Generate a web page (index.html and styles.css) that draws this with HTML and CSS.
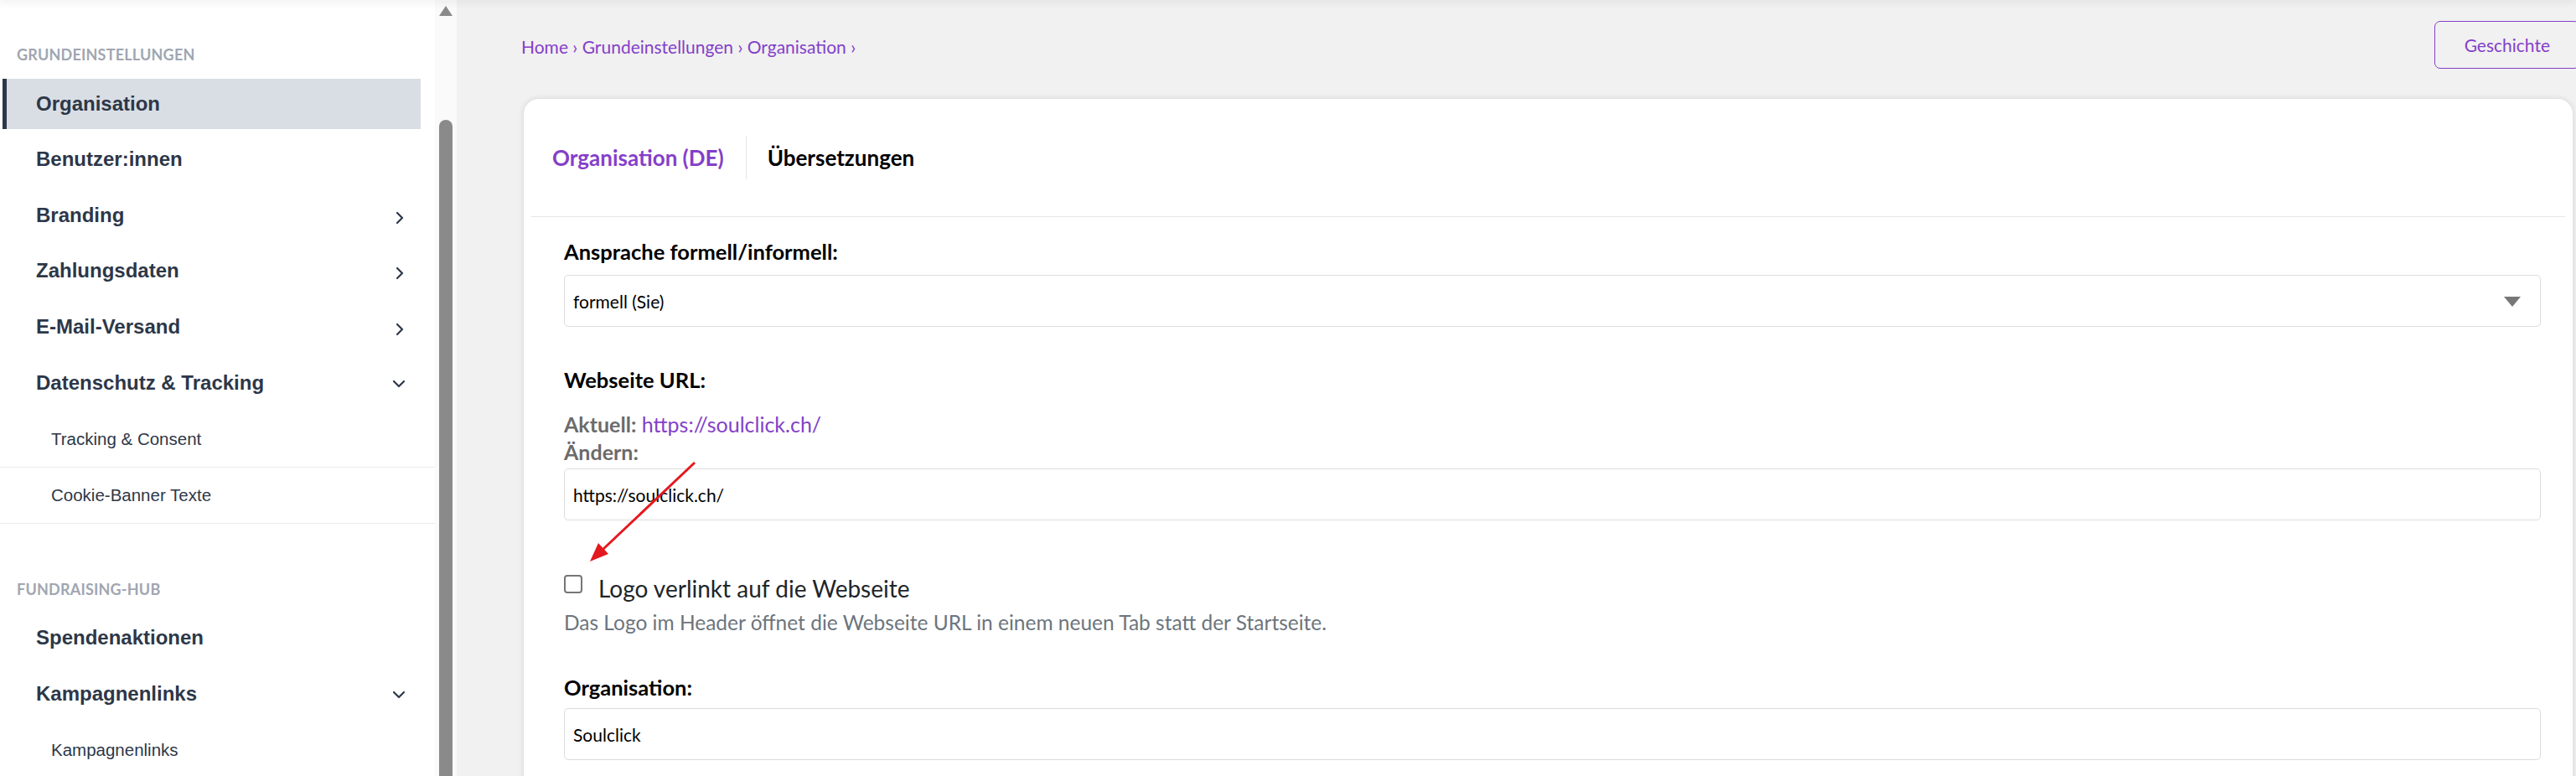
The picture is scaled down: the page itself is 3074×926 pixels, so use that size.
FILE: index.html
```html
<!DOCTYPE html>
<html lang="de">
<head>
  <meta charset="utf-8">
  <title>Organisation – Grundeinstellungen</title>
  <link rel="stylesheet" href="styles.css">
</head>
<body>
  <div class="top-shade"></div>

  <aside class="sidebar">
    <nav class="nav">
      <div class="nav-section">Grundeinstellungen</div>
      <a class="nav-item active">Organisation</a>
      <a class="nav-item">Benutzer:innen</a>
      <a class="nav-item">Branding
        <svg class="chev" width="10" height="16" viewBox="0 0 10 16"><polyline points="2,2 8,8 2,14"/></svg>
      </a>
      <a class="nav-item">Zahlungsdaten
        <svg class="chev" width="10" height="16" viewBox="0 0 10 16"><polyline points="2,2 8,8 2,14"/></svg>
      </a>
      <a class="nav-item">E-Mail-Versand
        <svg class="chev" width="10" height="16" viewBox="0 0 10 16"><polyline points="2,2 8,8 2,14"/></svg>
      </a>
      <a class="nav-item">Datenschutz &amp; Tracking
        <svg class="chev chev-down" width="16" height="10" viewBox="0 0 16 10"><polyline points="2,2 8,8 14,2"/></svg>
      </a>
      <div class="sub-list">
        <a class="sub-item">Tracking &amp; Consent</a>
        <a class="sub-item">Cookie-Banner Texte</a>
      </div>

      <div class="nav-section">Fundraising-Hub</div>
      <a class="nav-item">Spendenaktionen</a>
      <a class="nav-item">Kampagnenlinks
        <svg class="chev chev-down" width="16" height="10" viewBox="0 0 16 10"><polyline points="2,2 8,8 14,2"/></svg>
      </a>
      <div class="sub-list">
        <a class="sub-item">Kampagnenlinks</a>
      </div>
    </nav>
    <div class="scrollbar">
      <span class="sb-arrow"></span>
      <span class="sb-thumb"></span>
    </div>
  </aside>

  <main class="main">
    <div class="page-head">
      <div class="breadcrumb">
        <a>Home</a> › <a>Grundeinstellungen</a> › <a>Organisation</a> ›
      </div>
      <button class="btn-outline" type="button">Geschichte</button>
    </div>

    <section class="card">
      <div class="tabs">
        <a class="tab active">Organisation (DE)</a>
        <a class="tab">Übersetzungen</a>
      </div>
      <hr class="card-rule">

      <form class="card-body">
        <div class="field">
          <label class="field-label" for="salutation">Ansprache formell/informell:</label>
          <div class="select-wrap">
            <select id="salutation" class="control">
              <option>formell (Sie)</option>
              <option>informell (Du)</option>
            </select>
          </div>
        </div>

        <div class="field">
          <label class="field-label" for="website">Webseite URL:</label>
          <div class="current">
            <div><b>Aktuell:</b> <a class="link">https://soulclick.ch/</a></div>
            <div><b>Ändern:</b></div>
          </div>
          <input id="website" class="control" type="text" value="https://soulclick.ch/">
        </div>

        <div class="field field-check">
          <label class="check-row">
            <input type="checkbox" class="check">
            <span>Logo verlinkt auf die Webseite</span>
          </label>
          <p class="help">Das Logo im Header öffnet die Webseite URL in einem neuen Tab statt der Startseite.</p>
        </div>

        <div class="field field-org">
          <label class="field-label" for="org">Organisation:</label>
          <input id="org" class="control" type="text" value="Soulclick">
        </div>
      </form>
    </section>
  </main>

  <!-- red hint arrow pointing at the checkbox -->
  <svg class="hint-arrow" width="3074" height="926" viewBox="0 0 3074 926">
    <line x1="829" y1="552" x2="719" y2="656" stroke="#e3191f" stroke-width="3"/>
    <polygon points="704,670 726,661 714,648" fill="#e3191f"/>
  </svg>
</body>
</html>
```

FILE: styles.css
```css
/* General */
* {
  box-sizing: border-box;
}

html, body {
  height: 926px;
}

body {
  margin: 0;
  display: flex;
  overflow: hidden;
  background-color: #f1f1f1;
  font-family: Lato, "Open Sans", sans-serif;
  position: relative;
}

a {
  cursor: pointer;
}

/* shadow from the header bar above */
.top-shade {
  position: fixed;
  top: 0;
  left: 0;
  right: 0;
  height: 0;
  box-shadow: 0 0 10px 1px rgba(0, 0, 0, 0.22);
  z-index: 5;
}

/* Sidebar */
.sidebar {
  display: flex;
  flex-shrink: 0;
  width: 545px;
  height: 926px;
}

.nav {
  width: 519px;
  background-color: #fff;
  padding-top: 53px;
  font-family: "Liberation Sans", Arial, sans-serif;
  color: #2d3748;
}

.nav-section {
  font-family: Lato, "Open Sans", sans-serif;
  font-weight: 700;
  font-size: 18px;
  line-height: 24px;
  letter-spacing: 0.2px;
  text-transform: uppercase;
  color: #a0a6b1;
  padding-left: 20px;
  margin-bottom: 17px;
}

.sub-list + .nav-section {
  margin-top: 66px;
}

.nav-item {
  display: flex;
  align-items: center;
  justify-content: space-between;
  height: 60px;
  margin: 0 17px 6.67px 3px;
  padding: 0 18px 1px 35px;
  border-left: 5px solid transparent;
  font-weight: 700;
  font-size: 24px;
}

.nav-item.active {
  background-color: #d9dee5;
  border-left-color: #2d3748;
}

.chev {
  fill: none;
  stroke: #2d3748;
  stroke-width: 2.2;
  stroke-linecap: round;
  stroke-linejoin: round;
  margin-top: 6px;
  margin-right: 2px;
}

.chev-down {
  margin-top: 2px;
  margin-right: 0;
}

.sub-list {
  margin-top: -3px;
}

.sub-item {
  display: block;
  height: 67px;
  line-height: 66px;
  padding-left: 61px;
  border-bottom: 1px solid #ebebeb;
  font-size: 20.5px;
}

.sub-list:last-child .sub-item:last-child {
  border-bottom: none;
}

/* scrollbar of the sidebar */
.scrollbar {
  width: 26px;
  background-color: #fafafa;
  display: flex;
  flex-direction: column;
  align-items: center;
  padding-top: 7px;
}

.sb-arrow {
  width: 0;
  height: 0;
  border-left: 8px solid transparent;
  border-right: 8px solid transparent;
  border-bottom: 12px solid #8a8a8a;
}

.sb-thumb {
  width: 16px;
  flex: 1;
  margin-top: 124px;
  background-color: #8a8a8a;
  border-radius: 8px 8px 0 0;
}

/* Main area */
.main {
  flex: 1;
  min-width: 0;
  padding: 25px 0 0 77px;
}

.page-head {
  display: flex;
  justify-content: space-between;
  align-items: center;
  margin-right: -5px;
}

.breadcrumb {
  font-size: 21px;
  line-height: 30px;
  color: #843fc9;
  padding-top: 4px;
}

.breadcrumb a {
  color: #843fc9;
}

.btn-outline {
  height: 57px;
  padding: 0 35px;
  border: 1px solid #843fc9;
  border-radius: 7px;
  background: transparent;
  color: #843fc9;
  font-family: Lato, "Open Sans", sans-serif;
  font-size: 21px;
}

.card {
  margin: 36px 4px 0 3px;
  height: 900px;
  background-color: #fff;
  border-radius: 18px;
  box-shadow: 0 0 7px rgba(0, 0, 0, 0.13);
}

.tabs {
  display: flex;
  padding: 44px 0 44px 34px;
}

.tab {
  display: flex;
  align-items: center;
  height: 52px;
  font-weight: 700;
  font-size: 26px;
  color: #000;
}

.tab.active {
  color: #843fc9;
  padding-right: 26px;
}

.tab + .tab {
  border-left: 1px solid #e6e6e6;
  padding-left: 25px;
}

.card-rule {
  margin: 0 9px;
  border: 0;
  border-top: 1px solid #e6e6e6;
}

/* Form */
.card-body {
  padding: 23px 38px 0 48px;
}

.field + .field {
  margin-top: 45px;
}

.field-label {
  display: block;
  font-weight: 700;
  font-size: 25.5px;
  line-height: 36px;
  color: #000;
  margin-bottom: 10px;
}

.control {
  display: block;
  width: 100%;
  height: 62px;
  padding: 0 10px;
  border: 1px solid #dcdcdc;
  border-radius: 5px;
  background-color: #fff;
  font-family: Lato, "Open Sans", sans-serif;
  font-size: 21px;
  color: #000;
}

select.control {
  appearance: none;
  -webkit-appearance: none;
}

.select-wrap {
  position: relative;
}

.select-wrap::after {
  content: "";
  position: absolute;
  right: 24px;
  top: 26px;
  border-left: 10px solid transparent;
  border-right: 10px solid transparent;
  border-top: 12px solid #777;
  pointer-events: none;
}

.current {
  margin: 19px 0 3px;
  font-size: 25px;
  line-height: 33px;
  color: #6b6b6b;
}

.link {
  color: #843fc9;
}

.field + .field-check {
  margin-top: 63px;
}

.check-row {
  display: flex;
  align-items: flex-start;
  font-size: 28px;
  line-height: 36px;
  color: #212529;
}

.check {
  appearance: none;
  -webkit-appearance: none;
  width: 22px;
  height: 22px;
  margin: 2px 19px 0 0;
  border: 2px solid #767676;
  border-radius: 4px;
  background-color: #fff;
}

.help {
  margin: 8px 0 0;
  font-size: 24.5px;
  line-height: 30px;
  color: #6c757d;
}

.field + .field-org {
  margin-top: 44px;
}

.field-org .field-label {
  margin-bottom: 7px;
}

/* annotation layer */
.hint-arrow {
  position: absolute;
  left: 0;
  top: 0;
  pointer-events: none;
  z-index: 10;
}
```
